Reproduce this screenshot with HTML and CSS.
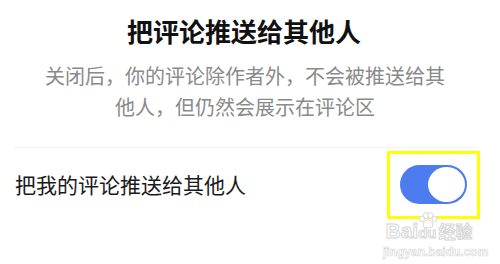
FILE: index.html
```html
<!DOCTYPE html>
<html lang="zh-CN">
<head>
    <meta charset="UTF-8">
    <meta name="viewport" content="width=device-width, initial-scale=1.0">
    <title>评论推送设置</title>
    <link rel="stylesheet" href="styles.css">
</head>
<body>
    <!-- 说明 -->
    <div class="header">
        <h1 class="title">把评论推送给其他人</h1>
        <p class="desc">关闭后，你的评论除作者外，不会被推送给其他人，但仍然会展示在评论区</p>
    </div>

    <!-- 开关 -->
    <div class="setting-row">
        <span class="setting-label">把我的评论推送给其他人</span>
        <div class="switch switch-on">
            <div class="switch-knob"></div>
        </div>
        <div class="highlight-box"></div>
    </div>

    <!-- 水印 -->
    <div class="watermark">
        <div class="wm-logo">
            <svg class="wm-paw" width="20" height="16" viewBox="0 0 20 16">
                <g fill="#fff" stroke="#d8d8d8" stroke-width="1">
                    <ellipse cx="4" cy="7" rx="2.5" ry="3"/>
                    <ellipse cx="8" cy="3.5" rx="2.5" ry="3"/>
                    <ellipse cx="12.5" cy="3.5" rx="2.5" ry="3"/>
                    <ellipse cx="16.5" cy="7" rx="2.5" ry="3"/>
                    <path d="M10 8 C6 8 4 13 6 15 C8 16 12 16 14 15 C16 13 14 8 10 8 Z"/>
                </g>
            </svg>
            <span class="wm-bai">Bai</span><span class="wm-du">du</span><span class="wm-jy">经验</span>
        </div>
        <div class="wm-url">jingyan.baidu.com</div>
    </div>
</body>
</html>
```

FILE: styles.css
```css
* {
    margin: 0;
    padding: 0;
    box-sizing: border-box;
}

html, body {
    width: 100%;
    height: 100%;
    background: #fff;
    overflow: hidden;
}

body {
    position: relative;
    font-family: "Noto Sans CJK SC", "Noto Sans", sans-serif;
    color: #111;
}

/* 标题和说明 */
.header {
    padding: 13px 0 0 0;
    text-align: center;
}

.title {
    font-size: 26px;
    line-height: 36px;
    font-weight: bold;
    margin-right: 12px;
}

.desc {
    width: 404px;
    margin: 11px 0 0 43px;
    font-size: 20px;
    line-height: 31px;
    color: #8a8a8a;
}

/* 开关行 */
.setting-row {
    position: relative;
    margin: 25px 25px 0 13px;
    padding: 17px 8px 0 2px;
    border-top: 1px solid #f2f2f2;
    display: flex;
    justify-content: space-between;
    align-items: center;
}

.setting-label {
    font-size: 21px;
    line-height: 39px;
    color: #1a1a1a;
}

.switch {
    width: 67px;
    height: 39px;
    border-radius: 20px;
    background: #4d7cf0;
    padding: 2px;
    display: flex;
    justify-content: flex-end;
}

.switch-knob {
    width: 37px;
    height: 35px;
    border-radius: 50%;
    background: #fff;
}

/* 标注框 */
.highlight-box {
    position: absolute;
    top: 3px;
    right: -5px;
    width: 93px;
    height: 68px;
    border: 3px solid #ffff00;
}

/* 水印 */
.watermark {
    position: absolute;
    left: 383px;
    top: 212px;
    width: 92px;
    text-align: center;
    font-family: "Liberation Sans", Arial, sans-serif;
    color: #fff;
    -webkit-text-stroke: 1px #d6d6d6;
}

.wm-logo {
    position: relative;
    padding-top: 8px;
    font-size: 21px;
    line-height: 22px;
    font-weight: bold;
    white-space: nowrap;
}

.wm-paw {
    position: absolute;
    left: 35px;
    top: 0;
}

.wm-du {
    font-size: 15px;
    margin-right: 2px;
}

.wm-jy {
    font-family: "Noto Sans CJK SC", sans-serif;
    font-size: 17px;
}

.wm-url {
    font-size: 12px;
    line-height: 16px;
    font-weight: bold;
    -webkit-text-stroke: 0.6px #d6d6d6;
}
```
